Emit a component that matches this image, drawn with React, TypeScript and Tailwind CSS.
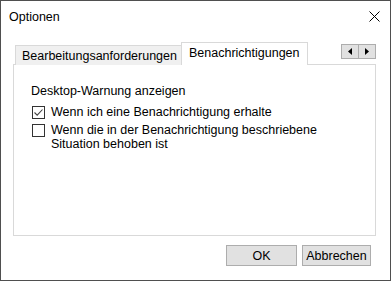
import React from "react";

function Check({ checked }: { checked: boolean }) {
  return (
    <div className="w-[13px] h-[13px] border border-[#333333] bg-white shrink-0 flex items-center justify-center mt-px">
      {checked && (
        <svg width="11" height="11" viewBox="0 0 11 11">
          <path d="M1.5 5.5 L4.2 8.2 L9.5 2.5" fill="none" stroke="#444444" strokeWidth="1.1" />
        </svg>
      )}
    </div>
  );
}

export default function App() {
  return (
    <div
      className="w-[391px] h-[281px] border border-[#4f4f4f] bg-white flex flex-col text-[12.5px] leading-[14px] text-black"
      style={{ fontFamily: '"Liberation Sans", Arial, sans-serif' }}
    >
      <div className="h-[31px] flex items-center justify-between pl-[8px] pr-[10px] shrink-0">
        <span>Optionen</span>
        <svg width="11" height="11" viewBox="0 0 11 11">
          <path d="M0.5 0.5 L10.5 10.5 M10.5 0.5 L0.5 10.5" stroke="#000" strokeWidth="1" />
        </svg>
      </div>
      <div className="flex items-end pl-[14px] pr-[14px] h-[33px] shrink-0 relative z-10">
        <div className="h-[20px] pl-[6px] pr-[6px] border border-[#d9d9d9] border-b-0 bg-[#f0f0f0] flex items-center pt-px">
          Bearbeitungsanforderungen
        </div>
        <div className="h-[23px] -ml-[3px] pl-[7px] border border-[#d9d9d9] border-b-0 bg-white flex items-center pb-[3px] w-[127px] shrink-0">
          Benachrichtigungen
        </div>
        <div className="ml-auto self-start mt-[12px] flex">
          <div className="w-[18px] h-[15px] border border-[#adadad] bg-[#e1e1e1] flex items-center justify-center">
            <svg width="4" height="7" viewBox="0 0 4 7"><path d="M4 0 L0 3.5 L4 7 Z" fill="#000" /></svg>
          </div>
          <div className="w-[18px] h-[15px] -ml-px border border-[#adadad] bg-[#e1e1e1] flex items-center justify-center">
            <svg width="4" height="7" viewBox="0 0 4 7"><path d="M0 0 L4 3.5 L0 7 Z" fill="#000" /></svg>
          </div>
        </div>
      </div>
      <div className="ml-[12px] mr-[14px] h-[172px] -mt-px border border-[#d9d9d9] bg-white pl-[17px] pt-[19px] flex flex-col">
        <div>Desktop-Warnung anzeigen</div>
        <div className="flex items-start gap-[6px] mt-[7px] pl-px">
          <Check checked={true} />
          <div>Wenn ich eine Benachrichtigung erhalte</div>
        </div>
        <div className="flex items-start gap-[6px] mt-[4px] pl-px">
          <Check checked={false} />
          <div>
            Wenn die in der Benachrichtigung beschriebene
            <br />
            Situation behoben ist
          </div>
        </div>
      </div>
      <div className="flex justify-end gap-[5px] pr-[19px] mt-[9px]">
        <div className="w-[71px] h-[21px] border border-[#adadad] bg-[#e1e1e1] flex items-center justify-center">OK</div>
        <div className="w-[69px] h-[21px] border border-[#adadad] bg-[#e1e1e1] flex items-center justify-center">Abbrechen</div>
      </div>
    </div>
  );
}
